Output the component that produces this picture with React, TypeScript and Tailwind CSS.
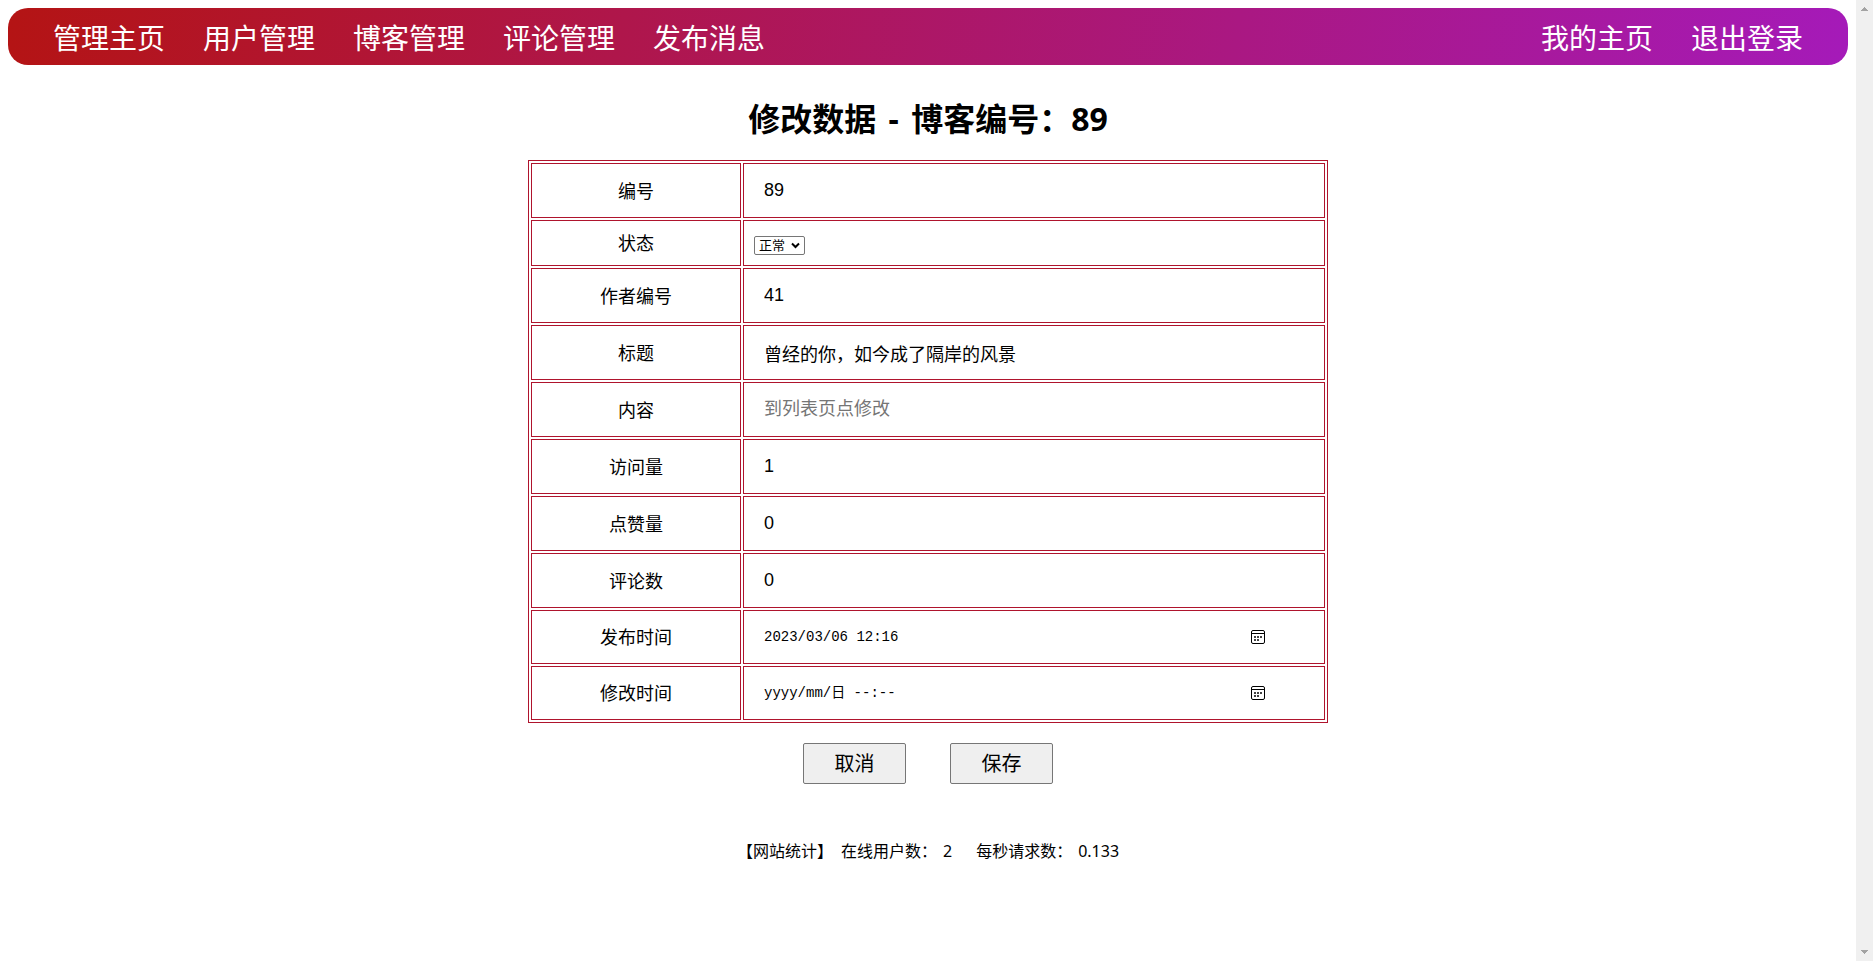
import { useState } from 'react';

interface Field {
  name: string;
  label: string;
  value: string;
  type: 'text' | 'select' | 'datetime';
  placeholder?: string;
}

const fields: Field[] = [
  { name: 'id', label: '编号', value: '89', type: 'text' },
  { name: 'status', label: '状态', value: '正常', type: 'select' },
  { name: 'author_id', label: '作者编号', value: '41', type: 'text' },
  { name: 'title', label: '标题', value: '曾经的你，如今成了隔岸的风景', type: 'text' },
  { name: 'content', label: '内容', value: '', type: 'text', placeholder: '到列表页点修改' },
  { name: 'views', label: '访问量', value: '1', type: 'text' },
  { name: 'likes', label: '点赞量', value: '0', type: 'text' },
  { name: 'comments', label: '评论数', value: '0', type: 'text' },
  { name: 'created_at', label: '发布时间', value: '2023/03/06 12:16', type: 'datetime' },
  { name: 'updated_at', label: '修改时间', value: '', type: 'datetime', placeholder: 'yyyy/mm/日 --:--' },
];

const leftLinks = ['管理主页', '用户管理', '博客管理', '评论管理', '发布消息'];
const rightLinks = ['我的主页', '退出登录'];

const NavLinks = ({ links }: { links: string[] }) => (
  <ul className="flex gap-[38px]">
    {links.map((link) => (
      <li key={link}>
        <a href="#" className="block text-[28px] leading-[53px] text-white">
          {link}
        </a>
      </li>
    ))}
  </ul>
);

const CalendarIcon = () => (
  <svg width="14" height="14" viewBox="0 0 14 14" fill="none" aria-hidden="true">
    <rect x="0.5" y="0.5" width="13" height="13" rx="1.5" stroke="#000" />
    <path d="M1 3.5h12" stroke="#000" />
    <path d="M3 6h2v2H3zM6 6h2v2H6zM9 6h2v2H9zM3 9h2v2H3zM6 9h2v2H6z" fill="#444" />
  </svg>
);

const Scrollbar = () => (
  <div className="flex w-[17px] shrink-0 flex-col items-center justify-between bg-[#f0f0f0] py-[7px]" aria-hidden="true">
    <svg width="7" height="4" viewBox="0 0 7 4" fill="#a3a3a3" shapeRendering="crispEdges">
      <path d="M3 0h1v1h1v1h1v1h1v1H0V3h1V2h1V1h1z" />
    </svg>
    <svg width="7" height="4" viewBox="0 0 7 4" fill="#a3a3a3" shapeRendering="crispEdges">
      <path d="M0 0h7v1H6v1H5v1H4v1H3V3H2V2H1V1H0z" />
    </svg>
  </div>
);

const FieldInput = ({ field }: { field: Field }) => {
  const [value, setValue] = useState(field.value);

  if (field.type === 'select') {
    return (
      <div className="relative inline-block align-bottom">
        <select
          id={field.name}
          name={field.name}
          value={value}
          onChange={(e) => setValue(e.target.value)}
          className="block h-[19px] w-[51px] appearance-none rounded-[2px] border border-[#767676] bg-white pl-1 text-[13px] leading-[17px]"
        >
          <option>正常</option>
          <option>删除</option>
        </select>
        <svg
          className="pointer-events-none absolute top-[6px] right-[5px]"
          width="9"
          height="7"
          viewBox="0 0 9 7"
          fill="none"
          stroke="#000"
          strokeWidth="2"
          aria-hidden="true"
        >
          <path d="M1 1.5l3.5 3.5L8 1.5" />
        </svg>
      </div>
    );
  }

  if (field.type === 'datetime') {
    return (
      <div className="flex h-8 items-center pr-[49px]">
        <input
          id={field.name}
          name={field.name}
          type="text"
          value={value}
          placeholder={field.placeholder}
          onChange={(e) => setValue(e.target.value)}
          className="min-w-0 flex-1 pl-[10px] font-['Liberation_Mono','Noto_Sans_CJK_SC',monospace] text-sm leading-6 outline-none placeholder:text-black"
        />
        <button type="button" aria-label="选择日期">
          <CalendarIcon />
        </button>
      </div>
    );
  }

  return (
    <input
      id={field.name}
      name={field.name}
      type="text"
      value={value}
      placeholder={field.placeholder}
      onChange={(e) => setValue(e.target.value)}
      className="block h-[33px] w-full px-[10px] font-['Liberation_Sans','Noto_Sans_CJK_SC',sans-serif] text-lg leading-6 outline-none placeholder:text-[#757575]"
    />
  );
};

export default function App() {
  return (
    <div className="flex min-h-screen bg-white font-['Noto_Sans','Noto_Sans_CJK_SC',sans-serif] text-black">
      <div className="min-w-0 flex-1 p-2">
        <nav className="flex justify-between rounded-[20px] bg-linear-[100deg,#b41414,#a51ab9] px-[45px] pt-1">
          <NavLinks links={leftLinks} />
          <NavLinks links={rightLinks} />
        </nav>

        <form className="mx-auto max-w-[800px]" onSubmit={(e) => e.preventDefault()}>
          <h1 className="mt-8 mb-5 text-center text-[32px] leading-[43px] font-bold">
            修改数据 <span className="mx-1">-</span> 博客编号：89
          </h1>
          <table className="w-full table-fixed border-separate border-spacing-[2px] border border-[#af142d]">
            <colgroup>
              <col className="w-[210px]" />
              <col />
            </colgroup>
            <tbody>
              {fields.map((field) => (
                <tr key={field.name}>
                  <th className="border border-[#af142d] p-[10px] text-lg leading-6 font-normal">
                    <label htmlFor={field.name}>{field.label}</label>
                  </th>
                  <td className="border border-[#af142d] p-[10px] leading-6">
                    <FieldInput field={field} />
                  </td>
                </tr>
              ))}
            </tbody>
          </table>
          <div className="mt-5 flex justify-center gap-11">
            <button type="button" className="h-[41px] w-[103px] rounded-[2px] border border-[#767676] bg-[#efefef] text-[20px]">
              取消
            </button>
            <button type="submit" className="h-[41px] w-[103px] rounded-[2px] border border-[#767676] bg-[#efefef] text-[20px]">
              保存
            </button>
          </div>
        </form>

        <footer className="mt-[55px] flex justify-center text-base leading-6">
          <span>【网站统计】</span>
          <span className="ml-2">在线用户数：</span>
          <span className="ml-1.5">2</span>
          <span className="ml-6">每秒请求数：</span>
          <span className="ml-1.5">0.133</span>
        </footer>
      </div>
      <Scrollbar />
    </div>
  );
}
